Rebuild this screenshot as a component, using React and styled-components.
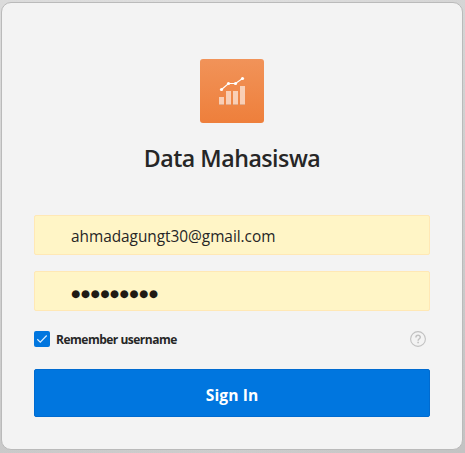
import React from "react";
import styled, { createGlobalStyle } from "styled-components";

const GlobalStyle = createGlobalStyle`
  * { box-sizing: border-box; }
  body {
    margin: 0;
    background: linear-gradient(90deg, #d6d6d6, #dadada 50%, #cfcfcf);
    font-family: "Open Sans", "Noto Sans", sans-serif;
    color: #262626;
    overflow: hidden;
  }
`;

const Page = styled.main`
  height: 453px;
  padding: 2px 2px 3px 1px;
  background: linear-gradient(180deg, rgba(255, 255, 255, 0.12), rgba(0, 0, 0, 0.06));
`;

const Card = styled.form`
  height: 448px;
  padding: 56px 32px 0;
  display: flex;
  flex-direction: column;
  align-items: center;
  background: #f3f3f3;
  border: 1px solid #bababa;
  border-radius: 10px;
`;

const Logo = styled.div`
  width: 64px;
  height: 64px;
  border-radius: 3px;
  background: linear-gradient(180deg, #f19359, #ee7f3b);
  svg { display: block; }
`;

const Title = styled.h1`
  margin: 20px 0 41px;
  height: 31px;
  line-height: 31px;
  font-size: 23.2px;
  font-weight: 600;
  letter-spacing: -0.5px;
  white-space: nowrap;
`;

const Field = styled.div`
  width: 396px;
  height: 40px;
  margin-bottom: 16px;
  padding-left: 36px;
  display: flex;
  align-items: center;
  background: #fff5c6;
  border: 1px solid #ffe8b5;
  border-radius: 2px;
`;

const Email = styled.span`
  font-size: 15.4px;
  line-height: 22px;
  letter-spacing: -0.03px;
  padding-top: 3px;
`;

const Secret = styled.span`
  font-family: "DejaVu Sans", sans-serif;
  font-size: 10.4px;
  line-height: 20px;
  letter-spacing: 0.65px;
  padding-top: 3px;
  color: #1f1a14;
`;

const Options = styled.div`
  width: 396px;
  height: 16px;
  margin: 4px 0 22px;
  padding-right: 4px;
  display: flex;
  align-items: center;
  svg { display: block; flex: none; }
`;

const Label = styled.label`
  flex: 1;
  padding-top: 2px;
  margin-left: 6px;
  font-size: 12px;
  line-height: 16px;
  font-weight: 700;
  letter-spacing: -0.5px;
`;

const SignIn = styled.button`
  width: 396px;
  height: 48px;
  padding: 3px 0 0;
  border: 1px solid #006bd0;
  border-radius: 2px;
  background: #0076df;
  color: #fff;
  font: 700 15.6px/22px "Open Sans", sans-serif;
  letter-spacing: 0.1px;
`;

const ChartIcon = () => (
  <svg width="64" height="64" viewBox="0 0 64 64">
    <path d="M19 38h5v8h-5zM26 32h5v14h-5zM33 32h5v14h-5zM40 27h5v19h-5z" fill="#fff" fillOpacity=".6" />
    <path d="M19 45.5h5M26 45.5h5M33 45.5h5M40 45.5h5" stroke="#a85a2c" strokeOpacity=".3" />
    <path d="M21.5 30.5l7-6h7l7-5" fill="none" stroke="#fff" strokeWidth="1.1" />
    {[[21.5, 30.5], [28.5, 24.5], [35.5, 24.5], [42.5, 19.5]].map(([x, y]) => (
      <circle key={x} cx={x} cy={y} r="1.6" fill="#fff" />
    ))}
  </svg>
);

const CheckIcon = () => (
  <svg width="16" height="16" viewBox="0 0 16 16">
    <rect width="16" height="16" rx="2" fill="#0076df" />
    <path d="M3.3 8.3l3 2.9 6.4-6.7" fill="none" stroke="#d9edff" strokeWidth="1.2" />
  </svg>
);

const HelpIcon = () => (
  <svg width="16" height="16" viewBox="0 0 16 16" fill="none" stroke="#c1c1c1">
    <circle cx="8" cy="8" r="7.4" strokeWidth="1.1" />
    <path d="M5.9 6.4c0-3 4.4-2.8 4.4-.2C10.3 7.7 8.1 7.8 8.1 9.7" strokeWidth="1.5" />
    <path d="M7.3 11.6h1.6" strokeWidth="1.5" />
  </svg>
);

export default function App() {
  return (
    <>
      <GlobalStyle />
      <Page>
        <Card>
          <Logo><ChartIcon /></Logo>
          <Title>Data Mahasiswa</Title>
          <Field><Email>ahmadagungt30@gmail.com</Email></Field>
          <Field><Secret>●●●●●●●●●</Secret></Field>
          <Options>
            <CheckIcon />
            <Label>Remember username</Label>
            <HelpIcon />
          </Options>
          <SignIn type="button">Sign In</SignIn>
        </Card>
      </Page>
    </>
  );
}
